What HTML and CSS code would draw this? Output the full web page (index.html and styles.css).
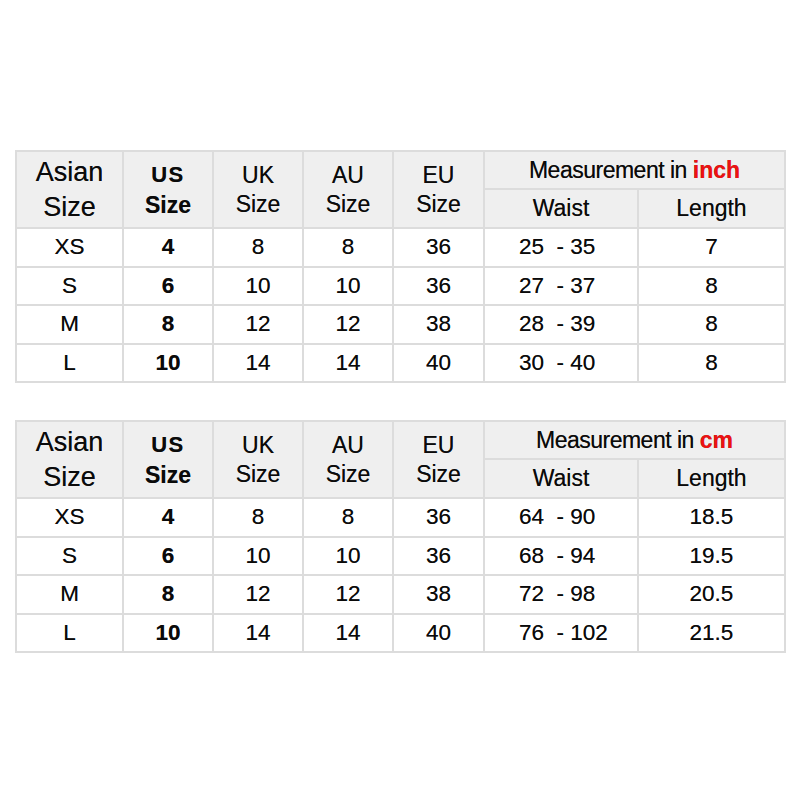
FILE: index.html
```html
<!DOCTYPE html>
<html>
<head>
<meta charset="utf-8">
<link rel="stylesheet" href="styles.css">
</head>
<body>
<div class="page">
  <table class="chart">
    <colgroup>
      <col class="c1"><col class="c2"><col class="c2"><col class="c2"><col class="c3"><col class="c4"><col class="c5">
    </colgroup>
    <thead>
      <tr class="h1">
        <th rowspan="2" class="asian">Asian<br>Size</th>
        <th rowspan="2" class="us"><span class="us-top">US</span><br>Size</th>
        <th rowspan="2" class="sz">UK<br>Size</th>
        <th rowspan="2" class="sz">AU<br>Size</th>
        <th rowspan="2" class="sz">EU<br>Size</th>
        <th colspan="2" class="meas">Measurement in <b class="unit">inch</b></th>
      </tr>
      <tr class="h2">
        <th class="sub">Waist</th>
        <th class="sub">Length</th>
      </tr>
    </thead>
    <tbody>
      <tr><td>XS</td><td class="b">4</td><td>8</td><td>8</td><td>36</td><td class="w">25  - 35</td><td>7</td></tr>
      <tr><td>S</td><td class="b">6</td><td>10</td><td>10</td><td>36</td><td class="w">27  - 37</td><td>8</td></tr>
      <tr><td>M</td><td class="b">8</td><td>12</td><td>12</td><td>38</td><td class="w">28  - 39</td><td>8</td></tr>
      <tr><td>L</td><td class="b">10</td><td>14</td><td>14</td><td>40</td><td class="w">30  - 40</td><td>8</td></tr>
    </tbody>
  </table>

  <table class="chart">
    <colgroup>
      <col class="c1"><col class="c2"><col class="c2"><col class="c2"><col class="c3"><col class="c4"><col class="c5">
    </colgroup>
    <thead>
      <tr class="h1">
        <th rowspan="2" class="asian">Asian<br>Size</th>
        <th rowspan="2" class="us"><span class="us-top">US</span><br>Size</th>
        <th rowspan="2" class="sz">UK<br>Size</th>
        <th rowspan="2" class="sz">AU<br>Size</th>
        <th rowspan="2" class="sz">EU<br>Size</th>
        <th colspan="2" class="meas">Measurement in <b class="unit">cm</b></th>
      </tr>
      <tr class="h2">
        <th class="sub">Waist</th>
        <th class="sub">Length</th>
      </tr>
    </thead>
    <tbody>
      <tr><td>XS</td><td class="b">4</td><td>8</td><td>8</td><td>36</td><td class="w">64  - 90</td><td>18.5</td></tr>
      <tr><td>S</td><td class="b">6</td><td>10</td><td>10</td><td>36</td><td class="w">68  - 94</td><td>19.5</td></tr>
      <tr><td>M</td><td class="b">8</td><td>12</td><td>12</td><td>38</td><td class="w">72  - 98</td><td>20.5</td></tr>
      <tr><td>L</td><td class="b">10</td><td>14</td><td>14</td><td>40</td><td class="w">76  - 102</td><td>21.5</td></tr>
    </tbody>
  </table>
</div>
</body>
</html>
```

FILE: styles.css
```css
html, body {
  margin: 0;
  padding: 0;
  background: #ffffff;
}

.page {
  padding: 150px 0 0 15px;
  display: flex;
  flex-direction: column;
  gap: 37px;
  font-family: "Liberation Sans", Arial, sans-serif;
  color: #0a0a0a;
}

.chart {
  border-collapse: collapse;
  table-layout: fixed;
  width: 769px;
}

.chart .c1 { width: 107px; }
.chart .c2 { width: 90px; }
.chart .c3 { width: 91px; }
.chart .c4 { width: 154px; }
.chart .c5 { width: 147px; }

.chart th,
.chart td {
  border: 2px solid #dcdcdc;
  padding: 0;
  text-align: center;
  vertical-align: middle;
  text-shadow: 0 0 0.6px rgba(0, 0, 0, 0.6);
}

.chart th {
  background: #efefef;
  font-weight: normal;
}

.h1 { height: 38px; }
.h2 { height: 39px; }

.asian {
  font-size: 27px;
  line-height: 35px;
  padding-top: 2px;
}

.chart th.us {
  font-size: 23px;
  font-weight: bold;
  line-height: 31px;
}

.us-top {
  letter-spacing: 1.5px;
  font-size: 22px;
}

.sz {
  font-size: 23px;
  line-height: 29px;
}

.meas {
  font-size: 23px;
  letter-spacing: -0.5px;
  line-height: 28px;
}

.unit {
  color: #ee1111;
  letter-spacing: 0;
}

.sub {
  font-size: 23px;
}

.chart tbody tr { height: 38.5px; }

.chart td {
  font-size: 22.5px;
  line-height: 24px;
}

.chart td.b {
  font-weight: bold;
  font-size: 22.5px;
}

.chart td.w {
  white-space: pre;
  text-align: left;
  padding-left: 34px;
}
```
